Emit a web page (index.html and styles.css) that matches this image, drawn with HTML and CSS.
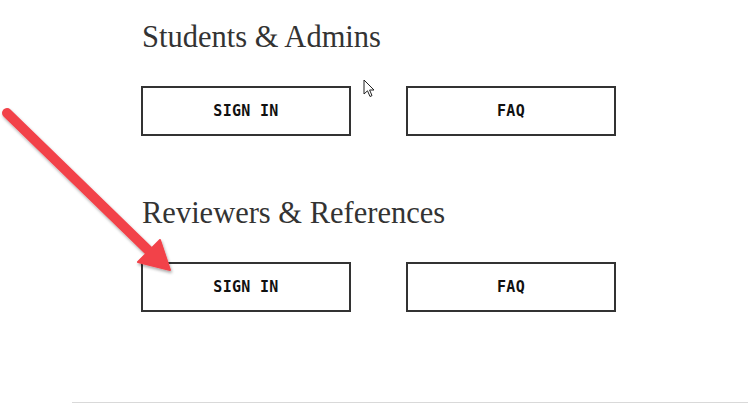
FILE: index.html
```html
<!DOCTYPE html>
<html lang="en">
<head>
	<meta charset="UTF-8"/>
	<title>Sign in</title>
	<link rel="stylesheet" href="styles.css">
</head>
<body>
	<div class="page">
		<section class="group">
			<h2>Students &amp; Admins</h2>
			<div class="actions">
				<a href="#" class="btn">SIGN IN</a>
				<a href="#" class="btn">FAQ</a>
			</div>
		</section>

		<section class="group">
			<h2>Reviewers &amp; References</h2>
			<div class="actions">
				<a href="#" class="btn">SIGN IN</a>
				<a href="#" class="btn">FAQ</a>
			</div>
		</section>
	</div>

	<div class="footer"></div>

	<!-- annotation arrow -->
	<svg class="arrow" width="190" height="290" viewBox="0 0 190 290">
		<defs>
			<filter id="shadow" x="-20%" y="-20%" width="140%" height="140%">
				<feDropShadow dx="1" dy="2" stdDeviation="1.5" flood-color="#000" flood-opacity="0.35"/>
			</filter>
		</defs>
		<g filter="url(#shadow)" fill="#f2424a" stroke="#f2424a">
			<line x1="7" y1="113" x2="148" y2="250" stroke-width="10" stroke-linecap="round"/>
			<polygon points="160,240 138,262 170,270" stroke-width="2" stroke-linejoin="round"/>
		</g>
	</svg>

	<!-- mouse pointer -->
	<svg class="pointer" width="14" height="20" viewBox="0 0 14 20">
		<path d="M1 1 L1 15 L4.5 11.8 L7 17.5 L9 16.6 L6.6 11 L11 11 Z" fill="#fff" stroke="#222" stroke-width="1" stroke-linejoin="round"/>
	</svg>
</body>
</html>
```

FILE: styles.css
```css
* {
	margin: 0;
	padding: 0;
	box-sizing: border-box;
}

body {
	background-color: #fff;
	color: #333;
	font-family: "Liberation Serif", serif;
	width: 748px;
	height: 409px;
	overflow: hidden;
	position: relative;
}

.page {
	padding: 17px 0 0 141px;
}

.group h2 {
	font-size: 30.5px;
	line-height: 36px;
	font-weight: normal;
	color: #333;
	padding: 2px 0 0 1px;
}

.group + .group {
	margin-top: 57px;
}

.actions {
	display: flex;
	gap: 55px;
	margin-top: 31px;
}

.btn {
	display: flex;
	justify-content: center;
	align-items: center;
	width: 210px;
	height: 50px;
	border: 2px solid #333;
	color: #111;
	text-decoration: none;
	font-family: "DejaVu Sans Mono", monospace;
	font-weight: bold;
	font-size: 15px;
	letter-spacing: 0.3px;
}

.footer {
	margin: 90px 0 0 72px;
	border-top: 1px solid #d9d9d9;
}

.arrow {
	position: absolute;
	left: 0;
	top: 0;
}

.pointer {
	position: absolute;
	left: 363px;
	top: 79px;
}
```
